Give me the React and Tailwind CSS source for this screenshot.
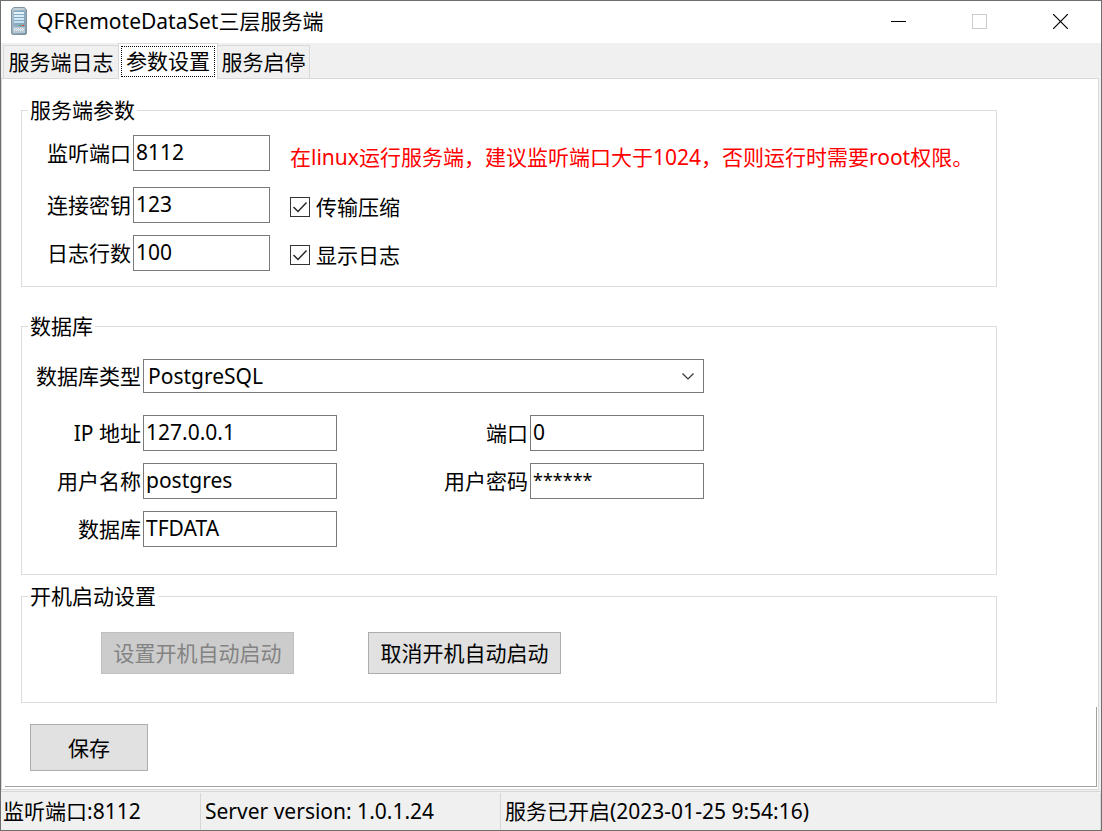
import { useState } from 'react';

const inputClass = "h-9 border border-[#7a7a7a] bg-white pb-[2px] pl-[2px] pr-1 outline-none";

const ServerIcon = () => (
  <svg width="16" height="28" viewBox="0 0 16 28" aria-hidden="true">
    <defs>
      <linearGradient id="tower" x1="0" y1="0" x2="1" y2="1">
        <stop offset="0" stopColor="#b3c6d2" />
        <stop offset="0.5" stopColor="#93aec1" />
        <stop offset="1" stopColor="#7894a8" />
      </linearGradient>
    </defs>
    <path d="M2.5 0.5 H13.5 L15.5 3 V26 Q15.5 27.5 14 27.5 H2 Q0.5 27.5 0.5 26 V3 Z" fill="url(#tower)" stroke="#8496a3" />
    <path d="M3 1 H13 L14.5 3 H1.5 Z" fill="#c0ced7" />
    <rect x="3" y="4" width="10" height="14" fill="#86a9c0" />
    <rect x="3" y="5" width="10" height="2" fill="#e3f2fb" />
    <rect x="3" y="8" width="10" height="2" fill="#d9edf8" />
    <rect x="3" y="11" width="10" height="2" fill="#d0e7f5" />
    <rect x="3" y="14" width="10" height="2" fill="#c4dfef" />
    <rect x="8" y="18" width="2" height="1" fill="#5aa64a" />
    <rect x="11" y="18" width="2" height="1" fill="#e0442e" />
    <rect x="2" y="20" width="12" height="6" fill="#b7c6d1" />
    <path d="M3 21.5 H13 M4 22.5 H13 M3 23.5 H13" stroke="#eef5f9" strokeDasharray="1 1" />
  </svg>
);

const TitleBar = () => (
  <header className="flex h-[42px] shrink-0 items-center bg-white pl-[10px]">
    <div className="flex flex-1 items-center gap-[10px] pb-[2px]">
      <ServerIcon />
      <h1>QFRemoteDataSet三层服务端</h1>
    </div>
    <button aria-label="最小化" className="flex h-full w-[81px] items-center justify-center pb-[2px] hover:bg-[#e5e5e5]">
      <svg width="15" height="15" viewBox="0 0 15 15"><path d="M0 7.5 H15" stroke="#000" /></svg>
    </button>
    <button aria-label="最大化" disabled className="flex h-full w-[81px] items-center justify-center pb-[2px]">
      <svg width="15" height="15" viewBox="0 0 15 15"><rect x="0.5" y="0.5" width="14" height="14" fill="none" stroke="#ccc" /></svg>
    </button>
    <button aria-label="关闭" className="flex h-full w-[81px] items-center justify-center pb-[2px] hover:bg-[#e81123]">
      <svg width="15" height="15" viewBox="0 0 15 15"><path d="M0 0 L15 15 M15 0 L0 15" stroke="#000" strokeWidth="1.2" /></svg>
    </button>
  </header>
);

const Tabs = () => (
  <div role="tablist" className="flex h-[35px] shrink-0 items-end pl-[2px]">
    <button role="tab" aria-selected="false" className="h-[33px] w-[115px] border-l border-t border-[#d9d9d9]">服务端日志</button>
    <button role="tab" aria-selected="true" className="relative -mb-px h-9 w-[100px] border-x border-t border-[#d9d9d9] bg-white px-[2px] pb-[2px] pt-[2px]">
      <span className="flex h-full items-center justify-center border border-dotted border-black pb-[2px]">参数设置</span>
    </button>
    <button role="tab" aria-selected="false" className="h-[33px] w-[92px] border-r border-t border-[#d9d9d9]">服务启停</button>
  </div>
);

const Group = ({ title, className, children }) => (
  <fieldset className={`max-w-[976px] border border-[#dcdcdc] ${className}`}>
    <legend className="ml-1.5 px-[2px]">{title}</legend>
    {children}
  </fieldset>
);

const CheckOption = ({ id, label }) => {
  const [checked, setChecked] = useState(true);

  return (
    <label htmlFor={id} className="ml-5 flex items-center gap-1.5 pt-1">
      <span className="grid h-5 w-5">
        <input
          id={id}
          type="checkbox"
          checked={checked}
          onChange={(e) => setChecked(e.target.checked)}
          className="col-start-1 row-start-1 h-5 w-5 appearance-none border border-[#333] bg-white"
        />
        {checked && (
          <svg viewBox="0 0 20 20" className="pointer-events-none col-start-1 row-start-1 h-5 w-5">
            <path d="M3.5 10 L8 14.5 L16.5 5.5" fill="none" stroke="#222" strokeWidth="1.4" />
          </svg>
        )}
      </span>
      {label}
    </label>
  );
};

const ServerRow = ({ id, label, value, children }) => (
  <div className="grid grid-cols-[111px_137px_1fr] items-center">
    <label htmlFor={id} className="pr-[2px] text-right">{label}</label>
    <input id={id} type="text" defaultValue={value} className={inputClass} />
    {children}
  </div>
);

const DbField = ({ id, label, value, labelClass, boxClass }) => (
  <>
    <label htmlFor={id} className={`shrink-0 pr-[2px] text-right ${labelClass}`}>{label}</label>
    <input id={id} type="text" defaultValue={value} autoComplete="off" className={`${inputClass} ${boxClass}`} />
  </>
);

const App = () => {
  return (
    <div className="flex min-h-screen flex-col border border-[#6e6e6e] bg-[#f0f0f0] font-['Noto_Sans','Noto_Sans_CJK_SC',sans-serif] text-[21px] leading-7 text-black">
      <TitleBar />
      <Tabs />

      <main className="mr-[2px] flex flex-1 flex-col border border-[#d9d9d9] bg-white pb-[2px]">
        <div className="pl-[19px] pr-5 pt-[17px]">
          {/* Server parameters */}
          <Group title="服务端参数" className="pb-[15px] pt-[11px]">
            <div className="mb-4">
              <ServerRow id="port" label="监听端口" value="8112">
                <p className="ml-5 self-end text-[#ff0000]">在linux运行服务端，建议监听端口大于1024，否则运行时需要root权限。</p>
              </ServerRow>
            </div>
            <div className="mb-3">
              <ServerRow id="key" label="连接密钥" value="123">
                <CheckOption id="compress" label="传输压缩" />
              </ServerRow>
            </div>
            <ServerRow id="lines" label="日志行数" value="100">
              <CheckOption id="showLog" label="显示日志" />
            </ServerRow>
          </Group>

          {/* Database */}
          <Group title="数据库" className="mt-[25px] pb-[27px] pt-[19px]">
            <div className="flex items-center">
              <label htmlFor="dbType" className="w-[121px] shrink-0 pr-[2px] text-right">数据库类型</label>
              <div className="grid w-[561px] items-center">
                <select id="dbType" defaultValue="PostgreSQL" className="col-start-1 row-start-1 h-[34px] appearance-none border border-[#7a7a7a] bg-white pl-1 outline-none">
                  <option>PostgreSQL</option>
                </select>
                <svg width="12" height="7" viewBox="0 0 12 7" className="pointer-events-none col-start-1 row-start-1 mr-[10px] justify-self-end">
                  <path d="M0.5 0.5 L6 6 L11.5 0.5" fill="none" stroke="#333" strokeWidth="1.2" />
                </svg>
              </div>
            </div>
            <div className="mt-[22px] flex items-center">
              <DbField id="ip" label="IP 地址" value="127.0.0.1" labelClass="w-[121px]" boxClass="w-[194px]" />
              <DbField id="dbPort" label="端口" value="0" labelClass="w-[193px]" boxClass="w-[174px]" />
            </div>
            <div className="mt-3 flex items-center">
              <DbField id="user" label="用户名称" value="postgres" labelClass="w-[121px]" boxClass="w-[194px]" />
              <DbField id="password" label="用户密码" value="******" labelClass="w-[193px]" boxClass="w-[174px] text-lg" />
            </div>
            <div className="mt-3 flex items-center">
              <DbField id="dbName" label="数据库" value="TFDATA" labelClass="w-[121px]" boxClass="w-[194px]" />
            </div>
          </Group>

          {/* Autostart */}
          <Group title="开机启动设置" className="mt-[7px] pb-7 pt-[22px]">
            <div className="flex gap-[74px] pl-[79px]">
              <button disabled className="h-[42px] w-[193px] border border-[#bfbfbf] bg-[#ccc] text-[#838383]">设置开机自动启动</button>
              <button className="h-[42px] w-[193px] border border-[#adadad] bg-[#e1e1e1]">取消开机自动启动</button>
            </div>
          </Group>
        </div>

        <div className="ml-[3px] mr-px mt-1 flex-1 border-b border-r border-[#a0a0a0] pb-[15px] pl-[25px] pt-[17px]">
          <button className="h-[47px] w-[118px] border border-[#adadad] bg-[#e1e1e1]">保存</button>
        </div>
      </main>

      <footer className="mt-px flex h-[39px] shrink-0 border-t border-[#d7d7d7] pt-px">
        <div className="w-[200px] border-r border-[#d7d7d7] pl-[2px] pt-1">监听端口:8112</div>
        <div className="w-[300px] border-r border-[#d7d7d7] pl-1 pt-1">Server version: 1.0.1.24</div>
        <div className="flex-1 border-r border-[#d7d7d7] pl-1 pt-1">服务已开启(2023-01-25 9:54:16)</div>
      </footer>
    </div>
  );
};

export default App;
